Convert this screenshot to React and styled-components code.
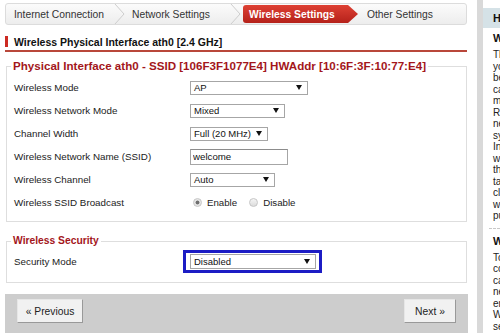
import React from 'react';
import styled, { createGlobalStyle } from 'styled-components';

const GlobalStyle = createGlobalStyle`
  html, body { margin: 0; padding: 0; background: #fff; }
  body {
    font-family: "Liberation Sans", Arial, sans-serif;
    color: #222;
    overflow: hidden;
  }
  * { box-sizing: border-box; }
`;

const Page = styled.div`
  display: flex;
  width: 500px;
  height: 333px;
  overflow: hidden;
`;

const Main = styled.div`
  width: 477px;
  flex: none;
  padding: 3px 10px 0 5px;
  display: flex;
  flex-direction: column;
`;

const Gutter = styled.div`
  width: 6px;
  flex: none;
  background: #d9d9d9;
`;

const Help = styled.aside`
  flex: 1;
  min-width: 0;
  padding-top: 8px;
  overflow: hidden;
`;

/* wizard steps */
const Steps = styled.nav`
  display: flex;
  align-items: center;
  height: 22px;
  flex: none;
  padding-left: 8px;
  border: 1px solid #dcdcdc;
  border-radius: 3px;
  background: linear-gradient(#fbfbfb, #ededed);
  font-size: 10.3px;
  color: #333;
`;

const Step = styled.span`
  width: ${p => p.$w}px;
  flex: none;
  white-space: nowrap;
`;

const StepSep = styled.svg`
  flex: none;
  margin-right: ${p => p.$mr}px;
`;

const ActiveStep = styled.span`
  width: 115px;
  height: 18px;
  flex: none;
  display: flex;
  align-items: center;
  margin: 0 9px 0 1px;
  padding-left: 6px;
  background: linear-gradient(#de4134, #b5211a);
  color: #fff;
  font-weight: bold;
  white-space: nowrap;
  border-radius: 3px 0 0 3px;
  clip-path: polygon(0 0, calc(100% - 10px) 0, 100% 50%, calc(100% - 10px) 100%, 0 100%);
`;

const Chevron = ({ mr }) => (
  <StepSep $mr={mr} width="12" height="20" viewBox="0 0 12 20">
    <polyline points="1,0 10,10 1,20" fill="none" stroke="#cdcdcd" strokeWidth="1" />
  </StepSep>
);

/* section heading */
const SectionTitle = styled.h2`
  margin: 8px 0 0;
  height: 19px;
  flex: none;
  display: flex;
  align-items: center;
  gap: 6px;
  border-bottom: 2px solid #b9473a;
  font-size: 10.5px;
  font-weight: bold;
  color: #111;
  white-space: nowrap;

  &::before {
    content: "";
    width: 3px;
    height: 11px;
    background: #cc2a22;
  }
`;

const Group = styled.fieldset`
  margin: ${p => p.$top}px 0 0 1px;
  padding: ${p => p.$pt}px 0 ${p => p.$pb}px;
  border: 1px solid #dedede;
  min-width: 0;
  flex: none;
`;

const Legend = styled.legend`
  margin-left: 4px;
  padding: 0 2px;
  font-size: ${p => p.$size || 10.3}px;
  line-height: 12px;
  font-weight: bold;
  color: #a3161b;
  white-space: nowrap;
`;

const Row = styled.div`
  display: grid;
  grid-template-columns: 176px 1fr;
  align-items: center;
  height: 23px;
  padding-left: 7px;
  font-size: 9.8px;
  color: #222;
`;

const Select = styled.div`
  width: ${p => p.$w}px;
  height: ${p => p.$h || 14}px;
  display: flex;
  align-items: center;
  justify-content: space-between;
  gap: 3px;
  padding: 0 5px 0 3px;
  border: 1px solid #a6a6a6;
  background: #fff;
  font-size: 9.5px;
  color: #111;
  white-space: nowrap;

  &::after {
    content: "";
    flex: none;
    border-left: 3px solid transparent;
    border-right: 3px solid transparent;
    border-top: 5px solid #111;
  }
`;

const TextInput = styled.input`
  width: 98px;
  height: 16px;
  padding: 0 2px;
  border: 1px solid #a6a6a6;
  border-top-color: #8c8c8c;
  font: 9.7px "Liberation Sans", Arial, sans-serif;
  color: #111;
  background: #fff;
`;

const RadioSet = styled.div`
  display: flex;
  align-items: center;
  padding-left: 3px;
  font-size: 9.7px;
  color: #222;
`;

const Radio = styled.span`
  width: 9px;
  height: 9px;
  flex: none;
  border-radius: 50%;
  border: 1px solid #c6c6c6;
  margin-right: 5px;
  background: ${p =>
    p.$on
      ? 'radial-gradient(circle, #6f6f6f 0 1.6px, #e6e6e6 2.3px)'
      : 'linear-gradient(#f5f5f5, #dcdcdc)'};
`;

const RadioText = styled.span`
  margin-right: ${p => p.$mr || 0}px;
`;

const FocusRing = styled.div`
  margin-left: -7px;
  width: 139px;
  height: 23px;
  display: flex;
  align-items: center;
  padding-left: 4px;
  border: 3px solid #1c1cc4;
`;

/* bottom buttons */
const Footer = styled.div`
  margin: 11px -1px 0 0;
  height: 39px;
  flex: none;
  display: flex;
  align-items: flex-start;
  justify-content: space-between;
  padding: 5px 12px 0;
  background: #cdcdcd;
`;

const NavButton = styled.button`
  width: ${p => p.$w}px;
  height: 24px;
  padding: 0;
  font: 10.3px "Liberation Sans", Arial, sans-serif;
  color: #222;
  background: #f1f1f1;
  border: 1px solid #e6e6e6;
  border-right-color: #999;
  border-bottom-color: #999;
`;

/* help panel */
const HelpHead = styled.div`
  height: 20px;
  display: flex;
  align-items: center;
  padding-left: 10px;
  background: #d5e2e7;
  font-size: 11px;
  font-weight: bold;
  color: #111;
  white-space: nowrap;
`;

const HelpBody = styled.div`
  padding: 4px 0 0 10px;
  font-size: 10px;
  line-height: 11.5px;
  color: #222;
  white-space: nowrap;
`;

const HelpTopic = styled.div`
  font-size: 11px;
  line-height: 12px;
  font-weight: bold;
  color: #111;
  margin-bottom: 5px;
`;

const HelpRule = styled.hr`
  border: 0;
  border-top: 1px dashed #c8c8c8;
  margin: 6px 0 6px -4px;
`;

const modeHelp = [
  'The router can be configured as',
  'your main access point (AP) or it can',
  'be used as a client, bridge or',
  'can repeat a signal from another',
  'main router. Repeater Bridge and',
  'Repeater modes extend the wireless',
  'network while the router stays in',
  'sync with the primary AP.',
  'In Client mode, the router acts as a',
  'wireless client of another AP and',
  'the LAN ports are bridged to the',
  'target network. With Client Bridge,',
  'clients on the LAN side see the',
  'whole remote network for the',
  'purposes of routing and DHCP.',
];

const securityHelp = [
  'To protect your wireless',
  'connection, choose a mode that',
  'can encrypt traffic so that other',
  'nearby devices cannot read it. The',
  'encryption should be WPA2 with AES.',
  'WEP is outdated and insecure, so',
  'select it only for older devices.',
];

export default function App() {
  return (
    <Page>
      <GlobalStyle />
      <Main>
        <Steps>
          <Step $w={100}>Internet Connection</Step>
          <Chevron mr={6} />
          <Step $w={98}>Network Settings</Step>
          <Chevron mr={0} />
          <ActiveStep>Wireless Settings</ActiveStep>
          <Step $w={80}>Other Settings</Step>
        </Steps>

        <SectionTitle>Wireless Physical Interface ath0 [2.4 GHz]</SectionTitle>

        <Group $top={8} $pt={4} $pb={7}>
          <Legend $size={11.6}>Physical Interface ath0 - SSID [106F3F1077E4] HWAddr [10:6F:3F:10:77:E4]</Legend>
          <Row>
            <span>Wireless Mode</span>
            <Select $w={118}>AP</Select>
          </Row>
          <Row>
            <span>Wireless Network Mode</span>
            <Select $w={95}>Mixed</Select>
          </Row>
          <Row>
            <span>Channel Width</span>
            <Select $w={78}>Full (20 MHz)</Select>
          </Row>
          <Row>
            <span>Wireless Network Name (SSID)</span>
            <TextInput defaultValue="welcome" readOnly />
          </Row>
          <Row>
            <span>Wireless Channel</span>
            <Select $w={85}>Auto</Select>
          </Row>
          <Row>
            <span>Wireless SSID Broadcast</span>
            <RadioSet>
              <Radio $on />
              <RadioText $mr={12}>Enable</RadioText>
              <Radio />
              <RadioText>Disable</RadioText>
            </RadioSet>
          </Row>
        </Group>

        <Group $top={13} $pt={3} $pb={9}>
          <Legend>Wireless Security</Legend>
          <Row>
            <span>Security Mode</span>
            <FocusRing>
              <Select $w={126} $h={15}>Disabled</Select>
            </FocusRing>
          </Row>
        </Group>

        <Footer>
          <NavButton $w={66}>« Previous</NavButton>
          <NavButton $w={52}>Next »</NavButton>
        </Footer>
      </Main>

      <Gutter />

      <Help>
        <HelpHead>Help</HelpHead>
        <HelpBody>
          <HelpTopic>Wireless Mode:</HelpTopic>
          {modeHelp.map(line => (
            <div key={line}>{line}</div>
          ))}
          <HelpRule />
          <HelpTopic>Wireless Security:</HelpTopic>
          {securityHelp.map(line => (
            <div key={line}>{line}</div>
          ))}
        </HelpBody>
      </Help>
    </Page>
  );
}
